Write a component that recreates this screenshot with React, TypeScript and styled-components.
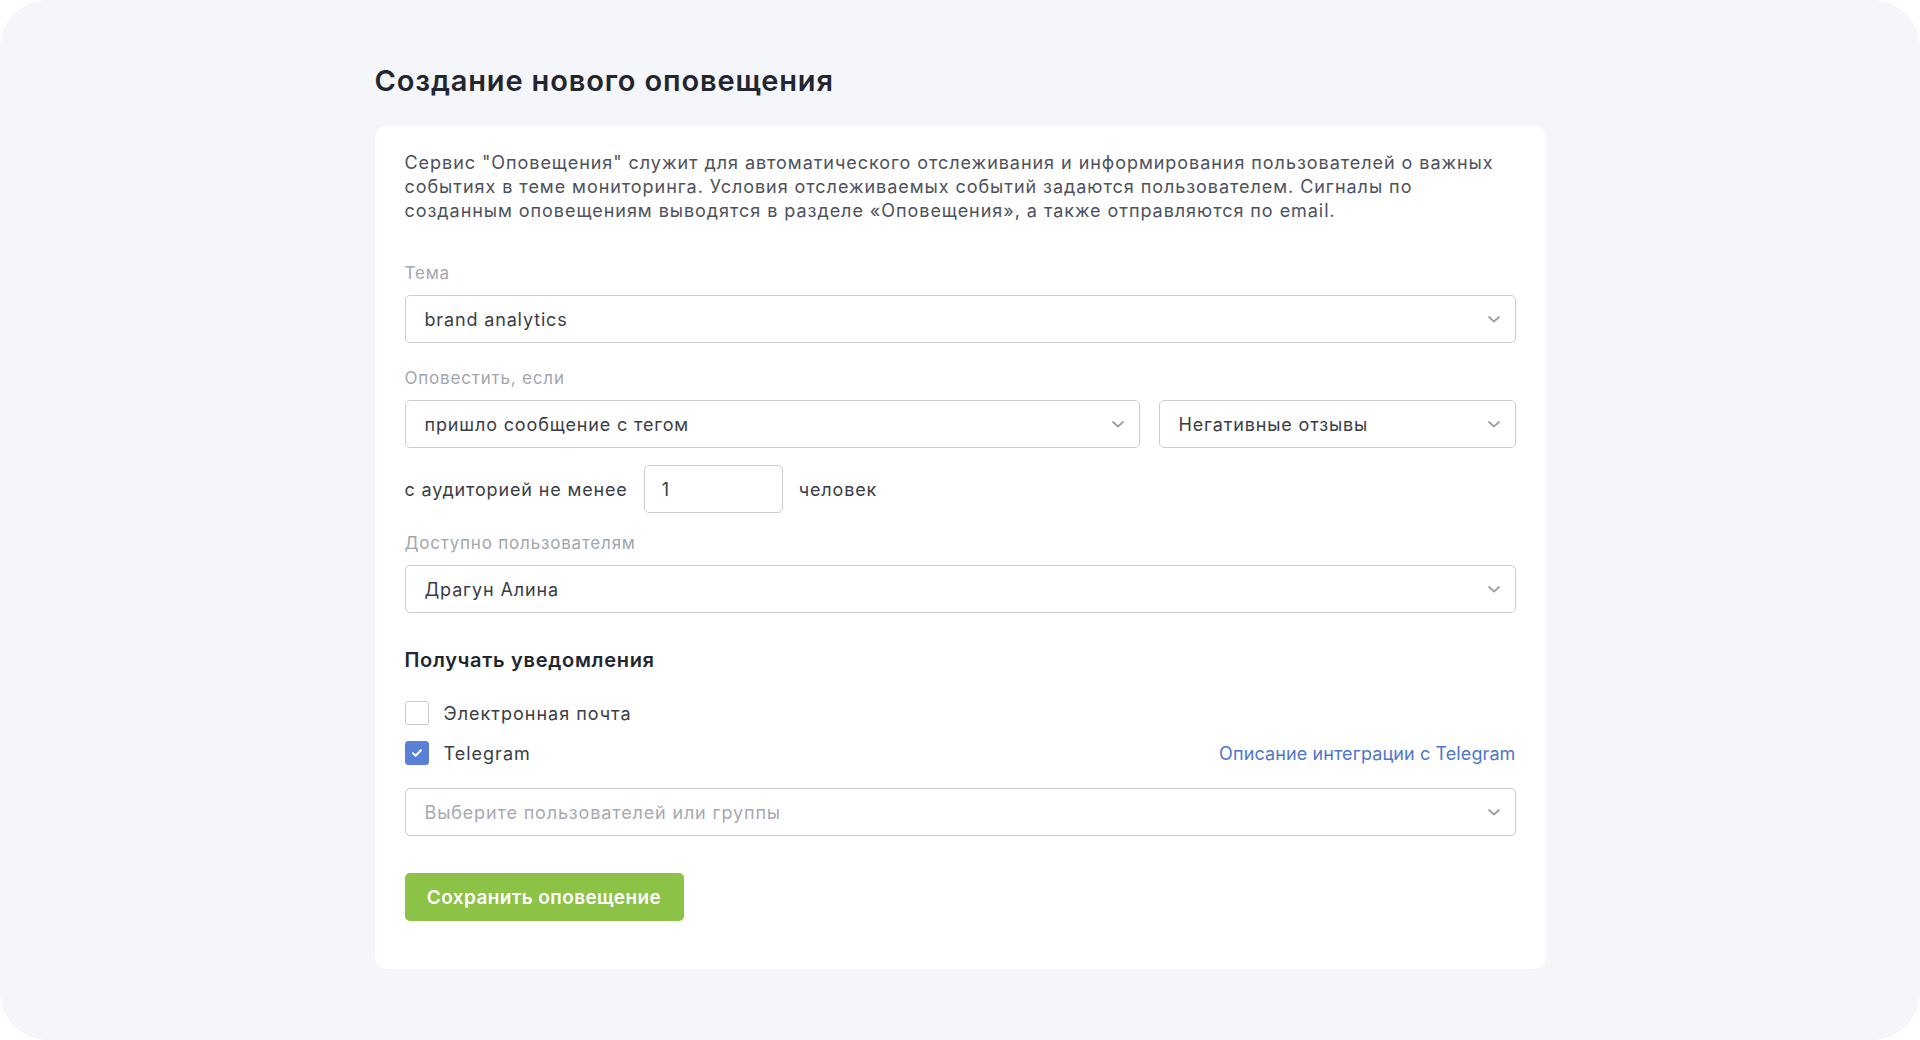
import React from "react";
import styled, { createGlobalStyle } from "styled-components";

const Global = createGlobalStyle`
  html, body { margin: 0; padding: 0; background: #ffffff; }
  body { font-family: Inter, "Noto Sans", sans-serif; }
  * { box-sizing: border-box; }
`;

const Page = styled.div`
  width: 1920px;
  height: 1040px;
  background: #f5f6fa;
  border-radius: 48px;
  display: flex;
  justify-content: center;
  padding-top: 60px;
`;

const Column = styled.div`
  width: 1171px;
  display: flex;
  flex-direction: column;
`;

const Title = styled.h1`
  margin: 0 0 24px;
  font-size: 29px;
  line-height: 42px;
  font-weight: 600;
  color: #23262f;
  letter-spacing: 0.85px;
`;

const Card = styled.div`
  background: #ffffff;
  border-radius: 12px;
  padding: 25px 30px 48px;
  display: flex;
  flex-direction: column;
`;

const Description = styled.p`
  margin: 0 0 39px;
  font-size: 18px;
  line-height: 24px;
  color: #4d515c;
  letter-spacing: 0.95px;
`;

const Label = styled.div`
  font-size: 17px;
  line-height: 22px;
  color: #a2a6af;
  margin-bottom: 11px;
  letter-spacing: 0.8px;
`;

const Field = styled.div<{ $mb?: number }>`
  margin-bottom: ${(p) => p.$mb ?? 24}px;
`;

const SelectBox = styled.div<{ $placeholder?: boolean; $grow?: boolean; $w?: number }>`
  height: 48px;
  border: 1px solid #c9ccd3;
  border-radius: 5px;
  display: flex;
  align-items: center;
  justify-content: space-between;
  padding: 0 13px 0 19px;
  font-size: 18px;
  color: ${(p) => (p.$placeholder ? "#a7aab2" : "#3a3d46")};
  background: #fff;
  ${(p) => (p.$grow ? "flex: 1;" : "")}
  ${(p) => (p.$w ? `width: ${p.$w}px; flex: none;` : "")}
  letter-spacing: 0.85px;
`;

const Row = styled.div<{ $gap: number; $mb?: number }>`
  display: flex;
  align-items: center;
  gap: ${(p) => p.$gap}px;
  margin-bottom: ${(p) => p.$mb ?? 0}px;
`;

const InlineText = styled.span`
  font-size: 18px;
  color: #3a3d46;
  letter-spacing: 0.85px;
`;

const NumberBox = styled.div`
  width: 139px;
  height: 48px;
  border: 1px solid #c9ccd3;
  border-radius: 5px;
  display: flex;
  align-items: center;
  padding: 0 17px;
  font-size: 18px;
  color: #3a3d46;
`;

const SectionTitle = styled.h2`
  margin: 34px 0 27px;
  font-size: 20px;
  line-height: 26px;
  font-weight: 600;
  color: #23262f;
  letter-spacing: 0.7px;
`;

const CheckRow = styled.div<{ $mb?: number }>`
  display: flex;
  align-items: center;
  justify-content: space-between;
  height: 26px;
  margin-bottom: ${(p) => p.$mb ?? 0}px;
`;

const CheckLabel = styled.label`
  display: flex;
  align-items: center;
  gap: 15px;
  font-size: 18px;
  color: #3a3d46;
  letter-spacing: 1px;
`;

const Box = styled.span<{ $checked?: boolean }>`
  width: 24px;
  height: 24px;
  border-radius: 3px;
  border: 1px solid ${(p) => (p.$checked ? "#5a7fd6" : "#c6c9d0")};
  background: ${(p) => (p.$checked ? "#5a7fd6" : "#fff")};
  display: flex;
  align-items: center;
  justify-content: center;
`;

const Link = styled.a`
  font-size: 18px;
  color: #4f76cc;
  text-decoration: none;
  letter-spacing: 0.1px;
`;

const Button = styled.button`
  margin-top: 37px;
  align-self: flex-start;
  width: 279px;
  height: 48px;
  border: none;
  border-radius: 5px;
  background: #8cc245;
  color: #ffffff;
  font-family: inherit;
  font-size: 19px;
  font-weight: 600;
  letter-spacing: 0.4px;
`;

const Chevron = () => (
  <svg width="16" height="16" viewBox="0 0 16 16" fill="none">
    <path d="M3 6l5 4.5L13 6" stroke="#9a9ea8" strokeWidth="1.7" strokeLinecap="round" strokeLinejoin="round" />
  </svg>
);

const Check = () => (
  <svg width="14" height="14" viewBox="0 0 14 14" fill="none">
    <path d="M3 7.3l2.6 2.5L11 4.3" stroke="#fff" strokeWidth="2" strokeLinecap="round" strokeLinejoin="round" />
  </svg>
);

export default function App() {
  return (
    <>
      <Global />
      <Page>
        <Column>
          <Title>Создание нового оповещения</Title>
          <Card>
            <Description>
              Сервис "Оповещения" служит для автоматического отслеживания и информирования пользователей о важных
              событиях в теме мониторинга. Условия отслеживаемых событий задаются пользователем. Сигналы по
              созданным оповещениям выводятся в разделе «Оповещения», а также отправляются по email.
            </Description>

            <Field>
              <Label>Тема</Label>
              <SelectBox>
                brand analytics
                <Chevron />
              </SelectBox>
            </Field>

            <Field $mb={17}>
              <Label>Оповестить, если</Label>
              <Row $gap={19}>
                <SelectBox $grow>
                  пришло сообщение с тегом
                  <Chevron />
                </SelectBox>
                <SelectBox $w={357}>
                  Негативные отзывы
                  <Chevron />
                </SelectBox>
              </Row>
            </Field>

            <Row $gap={16} $mb={19}>
              <InlineText>с аудиторией не менее</InlineText>
              <NumberBox>1</NumberBox>
              <InlineText>человек</InlineText>
            </Row>

            <Field $mb={0}>
              <Label>Доступно пользователям</Label>
              <SelectBox>
                Драгун Алина
                <Chevron />
              </SelectBox>
            </Field>

            <SectionTitle>Получать уведомления</SectionTitle>

            <CheckRow $mb={14}>
              <CheckLabel>
                <Box />
                Электронная почта
              </CheckLabel>
            </CheckRow>
            <CheckRow $mb={22}>
              <CheckLabel>
                <Box $checked>
                  <Check />
                </Box>
                Telegram
              </CheckLabel>
              <Link href="#">Описание интеграции с Telegram</Link>
            </CheckRow>

            <SelectBox $placeholder>
              Выберите пользователей или группы
              <Chevron />
            </SelectBox>

            <Button>Сохранить оповещение</Button>
          </Card>
        </Column>
      </Page>
    </>
  );
}
